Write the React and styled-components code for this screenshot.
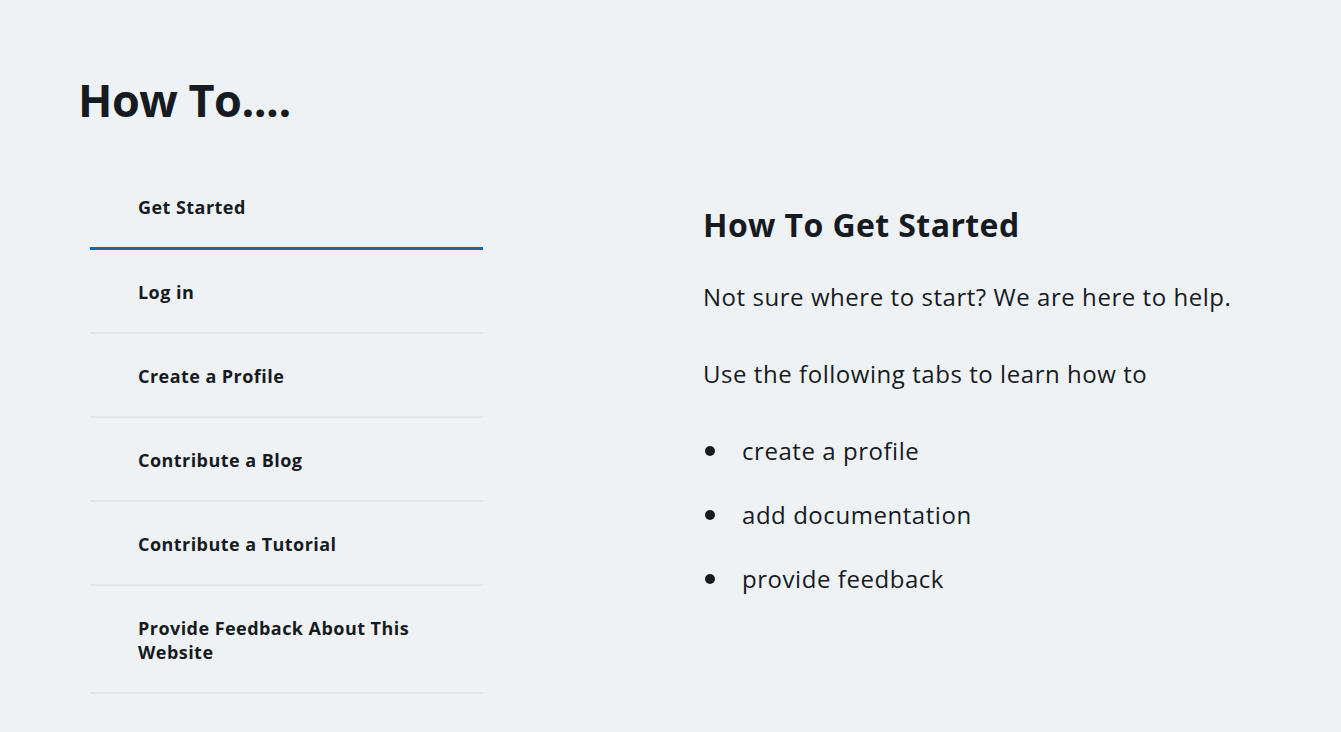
import styled, { createGlobalStyle } from "styled-components";

const GlobalStyle = createGlobalStyle`
  html, body {
    margin: 0;
    padding: 0;
    background: #eff2f5;
  }
  body {
    font-family: "Open Sans", "Noto Sans", sans-serif;
    color: #161b22;
  }
  * {
    box-sizing: border-box;
  }
`;

const tabs = [
  "Get Started",
  "Log in",
  "Create a Profile",
  "Contribute a Blog",
  "Contribute a Tutorial",
  "Provide Feedback About This Website",
];

const bullets = ["create a profile", "add documentation", "provide feedback"];

export default function App() {
  return (
    <Page>
      <GlobalStyle />
      <Title>How To....</Title>
      <Content>
        <TabList>
          {tabs.map((tab, i) => (
            <Tab key={tab} active={i === 0}>
              <span>{tab}</span>
            </Tab>
          ))}
        </TabList>
        <Panel>
          <PanelHeading>How To Get Started</PanelHeading>
          <Paragraph>Not sure where to start? We are here to help.</Paragraph>
          <Paragraph>Use the following tabs to learn how to</Paragraph>
          <BulletList>
            {bullets.map((b) => (
              <li key={b}>{b}</li>
            ))}
          </BulletList>
        </Panel>
      </Content>
    </Page>
  );
}

const Page = styled.div`
  min-height: 732px;
  padding: 70px 0 0 78px;
`;

const Title = styled.h1`
  margin: 0;
  font-size: 45px;
  font-weight: 700;
  line-height: 60px;
  letter-spacing: -0.5px;
`;

const Content = styled.div`
  display: flex;
  margin-top: 36px;
  padding-left: 12px;
`;

const TabList = styled.div`
  width: 393px;
  display: flex;
  flex-direction: column;
`;

const Tab = styled.div`
  padding: ${(p) => (p.active ? "29px 60px 28px 48px" : "30px 60px 28px 48px")};
  font-size: 18px;
  font-weight: 700;
  line-height: 24px;
  letter-spacing: 0.45px;
  border-bottom: ${(p) => (p.active ? "3px solid #0b6bae" : "2px solid #e3e6ea")};
  cursor: pointer;
`;

const Panel = styled.div`
  margin-left: 220px;
  padding-top: 39px;
  flex: 1;
`;

const PanelHeading = styled.h2`
  margin: 0 0 37px;
  font-size: 32px;
  font-weight: 700;
  line-height: 40px;
  letter-spacing: 0.4px;
`;

const Paragraph = styled.p`
  margin: 0 0 48px;
  font-size: 24px;
  line-height: 29px;
  letter-spacing: 0.55px;
`;

const BulletList = styled.ul`
  margin: 0;
  padding: 0;
  list-style: none;
  font-size: 24px;
  line-height: 29px;
  letter-spacing: 0.55px;

  li {
    position: relative;
    padding-left: 39px;
    margin-bottom: 35px;
  }

  li::before {
    content: "";
    position: absolute;
    left: 2px;
    top: 10px;
    width: 10px;
    height: 10px;
    border-radius: 50%;
    background: #161b22;
  }
`;
